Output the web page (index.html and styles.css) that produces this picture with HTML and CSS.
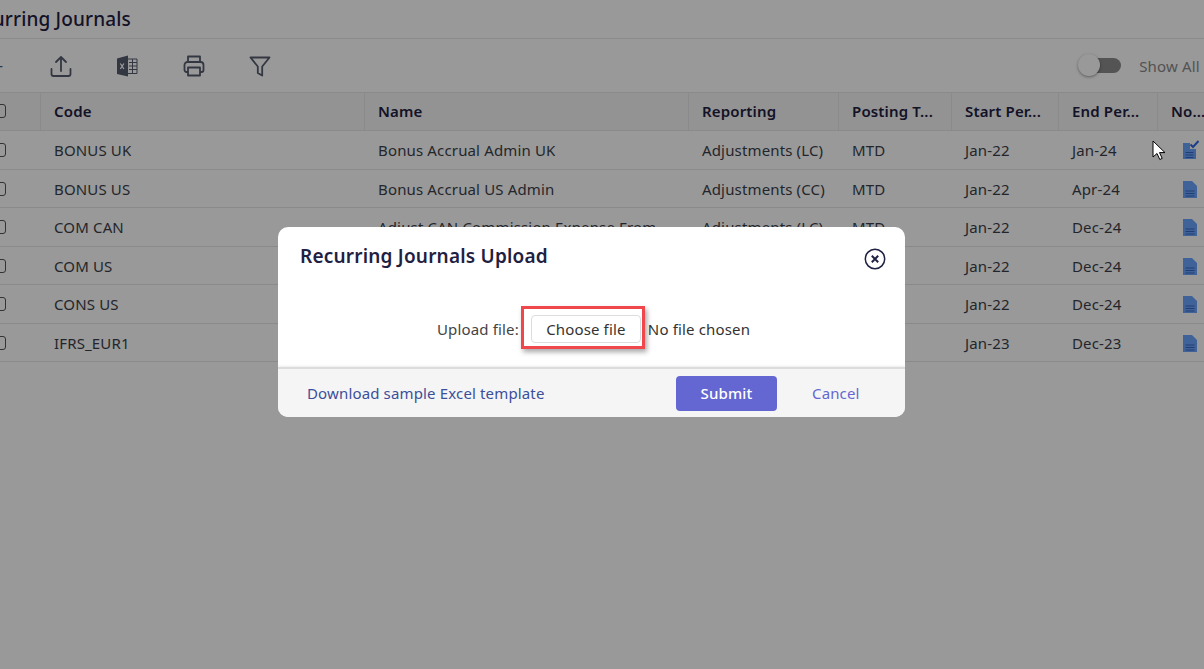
FILE: index.html
```html
<!DOCTYPE html>
<html lang="en">
<head>
  <meta charset="UTF-8">
  <title>Recurring Journals</title>
  <link rel="stylesheet" href="styles.css">
</head>
<body>
  <div class="page">
    <div class="page-title">Recurring Journals</div>

    <div class="toolbar">
      <span class="tool tool-add">+</span>
      <svg class="tool" width="22" height="24" viewBox="0 0 22 24" fill="none" stroke="#565c6e" stroke-width="1.800" stroke-linecap="round" stroke-linejoin="round">
        <path d="M1.500 15v5a2 2 0 0 0 2 2h15a2 2 0 0 0 2-2v-5"/>
        <path d="M11 17V3.500M6 8l5-5 5 5"/>
      </svg>
      <svg class="tool" width="22" height="24" viewBox="0 0 22 24">
        <path d="M1 4.500l11-3v21l-11-2.500z" fill="#565c6e"/>
        <path d="M12 5h9v14.500h-9" fill="none" stroke="#565c6e" stroke-width="1"/>
        <path d="M13 8.500h8M13 12h8M13 15.500h8M16.500 5v14.500" stroke="#565c6e" stroke-width="1"/>
        <path d="M4.300 9.500l3.600 5.500M7.900 9.500l-3.600 5.500" stroke="#fff" stroke-width="1.300"/>
      </svg>
      <svg class="tool" width="22" height="24" viewBox="0 0 22 24" fill="none" stroke="#565c6e" stroke-width="1.800" stroke-linejoin="round">
        <path d="M5 8V2.500h12V8"/>
        <path d="M5 18H3.500a2 2 0 0 1-2-2v-5a3 3 0 0 1 3-3h13a3 3 0 0 1 3 3v5a2 2 0 0 1-2 2H17"/>
        <path d="M5 13.500h12v8H5z"/>
      </svg>
      <svg class="tool" width="22" height="24" viewBox="0 0 22 24" fill="none" stroke="#565c6e" stroke-width="1.800" stroke-linejoin="round">
        <path d="M1.500 3.500h19l-7.300 9v9l-4.400-2.500v-6.500z"/>
      </svg>
      <div class="show-all">
        <span class="switch"><span class="knob"></span></span>
        <span class="show-label">Show All</span>
      </div>
    </div>

    <div class="grid">
      <div class="row head">
        <div class="cell check"><span class="box"></span></div>
        <div class="cell">Code</div>
        <div class="cell">Name</div>
        <div class="cell">Reporting</div>
        <div class="cell">Posting T...</div>
        <div class="cell">Start Per...</div>
        <div class="cell">End Per...</div>
        <div class="cell">No...</div>
      </div>
      <div class="row">
        <div class="cell check"><span class="box"></span></div>
        <div class="cell">BONUS UK</div>
        <div class="cell">Bonus Accrual Admin UK</div>
        <div class="cell">Adjustments (LC)</div>
        <div class="cell">MTD</div>
        <div class="cell">Jan-22</div>
        <div class="cell">Jan-24</div>
        <div class="cell note">
          <svg width="20" height="20" viewBox="0 0 20 20">
            <path d="M2 3h7v6h6v10H2z" fill="#6aa6ff"/>
            <path d="M4.500 12.500h8M4.500 15h8M4.500 17.500h8" stroke="#3a66c0" stroke-width="1.200"/>
            <path d="M9.500 4.500l2.500 2.500 5.500-6" fill="none" stroke="#2f69e0" stroke-width="2"/>
          </svg>
        </div>
      </div>
      <div class="row">
        <div class="cell check"><span class="box"></span></div>
        <div class="cell">BONUS US</div>
        <div class="cell">Bonus Accrual US Admin</div>
        <div class="cell">Adjustments (CC)</div>
        <div class="cell">MTD</div>
        <div class="cell">Jan-22</div>
        <div class="cell">Apr-24</div>
        <div class="cell note">
          <svg width="20" height="20" viewBox="0 0 20 20">
            <path d="M2 2h9l5 5v12H2z" fill="#6aa6ff"/>
            <path d="M4.500 12h9M4.500 14.500h9M4.500 17h9" stroke="#3a66c0" stroke-width="1.200"/>
          </svg>
        </div>
      </div>
      <div class="row">
        <div class="cell check"><span class="box"></span></div>
        <div class="cell">COM CAN</div>
        <div class="cell">Adjust CAN Commission Expense From</div>
        <div class="cell">Adjustments (LC)</div>
        <div class="cell">MTD</div>
        <div class="cell">Jan-22</div>
        <div class="cell">Dec-24</div>
        <div class="cell note">
          <svg width="20" height="20" viewBox="0 0 20 20">
            <path d="M2 2h9l5 5v12H2z" fill="#6aa6ff"/>
            <path d="M4.500 12h9M4.500 14.500h9M4.500 17h9" stroke="#3a66c0" stroke-width="1.200"/>
          </svg>
        </div>
      </div>
      <div class="row">
        <div class="cell check"><span class="box"></span></div>
        <div class="cell">COM US</div>
        <div class="cell">Adjust US Commission Expense From</div>
        <div class="cell">Adjustments (LC)</div>
        <div class="cell">MTD</div>
        <div class="cell">Jan-22</div>
        <div class="cell">Dec-24</div>
        <div class="cell note">
          <svg width="20" height="20" viewBox="0 0 20 20">
            <path d="M2 2h9l5 5v12H2z" fill="#6aa6ff"/>
            <path d="M4.500 12h9M4.500 14.500h9M4.500 17h9" stroke="#3a66c0" stroke-width="1.200"/>
          </svg>
        </div>
      </div>
      <div class="row">
        <div class="cell check"><span class="box"></span></div>
        <div class="cell">CONS US</div>
        <div class="cell">Consolidation Adjustment US</div>
        <div class="cell">Adjustments (LC)</div>
        <div class="cell">MTD</div>
        <div class="cell">Jan-22</div>
        <div class="cell">Dec-24</div>
        <div class="cell note">
          <svg width="20" height="20" viewBox="0 0 20 20">
            <path d="M2 2h9l5 5v12H2z" fill="#6aa6ff"/>
            <path d="M4.500 12h9M4.500 14.500h9M4.500 17h9" stroke="#3a66c0" stroke-width="1.200"/>
          </svg>
        </div>
      </div>
      <div class="row">
        <div class="cell check"><span class="box"></span></div>
        <div class="cell">IFRS_EUR1</div>
        <div class="cell">IFRS Adjustment EUR</div>
        <div class="cell">Adjustments (LC)</div>
        <div class="cell">MTD</div>
        <div class="cell">Jan-23</div>
        <div class="cell">Dec-23</div>
        <div class="cell note">
          <svg width="20" height="20" viewBox="0 0 20 20">
            <path d="M2 2h9l5 5v12H2z" fill="#6aa6ff"/>
            <path d="M4.500 12h9M4.500 14.500h9M4.500 17h9" stroke="#3a66c0" stroke-width="1.200"/>
          </svg>
        </div>
      </div>
    </div>
  </div>

  <div class="overlay">
    <div class="modal">
      <div class="modal-top">
        <h2 class="modal-title">Recurring Journals Upload</h2>
        <svg class="modal-close" width="22" height="22" viewBox="0 0 22 22" fill="none" stroke="#1f2142">
          <circle cx="11" cy="11" r="9.700" stroke-width="1.500"/>
          <path d="M7.800 7.800l6.400 6.400M14.200 7.800l-6.400 6.400" stroke-width="2"/>
        </svg>
      </div>
      <div class="modal-body">
        <span class="upload-label">Upload file:</span>
        <button class="file-btn" type="button">Choose file</button>
        <span class="file-name">No file chosen</span>
        <span class="highlight"></span>
      </div>
      <div class="modal-foot">
        <a class="sample-link" href="#">Download sample Excel template</a>
        <button class="btn-submit" type="button">Submit</button>
        <a class="btn-cancel" href="#">Cancel</a>
      </div>
    </div>
  </div>

  <svg class="cursor" width="16" height="22" viewBox="0 0 16 22">
    <path d="M1 1v16l4-3.500 2.800 6 2.400-1.100-2.700-5.800H13z" fill="#fff" stroke="#000" stroke-width="1"/>
  </svg>
</body>
</html>
```

FILE: styles.css
```css
body {
  margin: 0;
  height: 669px;
  overflow: hidden;
  background: #fff;
  color: #3c3f4a;
  font-family: "Noto Sans", "Liberation Sans", sans-serif;
  font-size: 15px;
  letter-spacing: 0.15px;
}

.page {
  margin-left: -71px;
  width: 1400px;
}

.page-title {
  height: 38px;
  line-height: 38px;
  padding-left: 31px;
  font-size: 19px;
  font-weight: 500;
  color: #1f2142;
  border-bottom: 1px solid #e6e6e6;
}

.toolbar {
  display: flex;
  align-items: center;
  height: 53px;
  border-bottom: 1px solid #e6e6e6;
}

.tool {
  flex: none;
  margin-right: 44.300px;
}

.tool-add {
  width: 12px;
  margin-left: 63px;
  margin-right: 46px;
  font-size: 20px;
  color: #565c6e;
}

.show-all {
  display: flex;
  align-items: center;
  margin-left: 767px;
}

.switch {
  display: block;
  position: relative;
  width: 39px;
  height: 15px;
  border-radius: 8px;
  background: #8c8c8c;
}

.knob {
  position: absolute;
  left: -4px;
  top: -4px;
  width: 22px;
  height: 22px;
  border-radius: 50%;
  background: #fff;
  box-shadow: 0 1px 3px rgba(0, 0, 0, 0.4);
}

.show-label {
  margin-left: 18px;
  color: #8a8a8a;
}

.row {
  display: grid;
  grid-template-columns: 112px 324px 324px 150px 113px 107px 99px 130px;
  height: 38.500px;
  border-bottom: 1px solid #e6e6e6;
  box-sizing: border-box;
}

.cell {
  display: flex;
  align-items: center;
  box-sizing: border-box;
  padding-left: 13px;
  white-space: nowrap;
  overflow: hidden;
}

.check {
  padding-left: 63px;
}

.box {
  flex: none;
  width: 12px;
  height: 12px;
  border: 1px solid #555;
  border-radius: 3px;
}

.head {
  height: 38.250px;
  background: #f5f5f5;
  font-weight: 600;
  color: #1f2142;
}

.head .cell {
  padding-bottom: 2px;
  border-right: 1px solid #e6e6e6;
}

.note {
  padding-left: 23px;
}

.overlay {
  position: absolute;
  left: 0;
  top: 0;
  width: 100%;
  height: 100%;
  box-sizing: border-box;
  padding: 227px 0 0 278px;
  background: rgba(0, 0, 0, 0.4);
}

.modal {
  width: 627px;
  height: 190px;
  display: flex;
  flex-direction: column;
  background: #fff;
  border-radius: 10px;
  overflow: hidden;
}

.modal-top {
  display: flex;
  justify-content: space-between;
  box-sizing: border-box;
  height: 61px;
  padding: 16px 19px 0 22px;
}

.modal-title {
  margin: 0;
  font-size: 19px;
  font-weight: 600;
  letter-spacing: 0.2px;
  color: #1f2142;
}

.modal-close {
  margin-top: 5px;
}

.modal-body {
  position: relative;
  display: flex;
  align-items: center;
  box-sizing: border-box;
  height: 79px;
  padding: 3px 0 0 159px;
}

.upload-label {
  margin-right: 12px;
  color: #444;
}

.file-btn {
  width: 110px;
  height: 28px;
  margin-right: 7px;
  font: inherit;
  letter-spacing: inherit;
  color: #333;
  background: #fff;
  border: 1px solid #ddd;
  border-radius: 4px;
}

.file-name {
  color: #333;
}

.highlight {
  position: absolute;
  left: 243px;
  top: 18px;
  box-sizing: border-box;
  width: 124px;
  height: 43px;
  border: 3px solid #f0474c;
  box-shadow: 2px 3px 5px rgba(0, 0, 0, 0.35);
}

.modal-foot {
  display: flex;
  align-items: center;
  flex: 1;
  padding-left: 29px;
  background: #f5f5f5;
  border-top: 2px solid #dcdcdc;
  box-shadow: 0 -1px 2px rgba(0, 0, 0, 0.08);
}

.sample-link {
  width: 237px;
  margin-right: 132px;
  color: #3b4f9a;
  text-decoration: none;
  white-space: nowrap;
}

.btn-submit {
  width: 101px;
  height: 35px;
  margin-right: 35px;
  font: inherit;
  font-weight: 500;
  letter-spacing: inherit;
  color: #fff;
  background: #6467d1;
  border: 0;
  border-radius: 4px;
}

.btn-cancel {
  color: #6467d1;
  text-decoration: none;
}

.cursor {
  position: absolute;
  left: 1152px;
  top: 140px;
}
```
